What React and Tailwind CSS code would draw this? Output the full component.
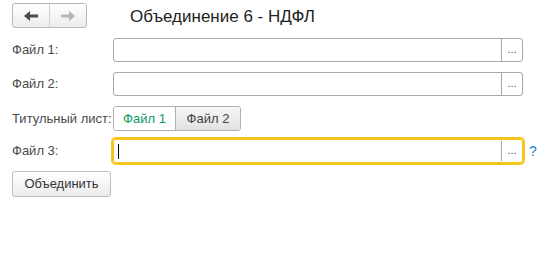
import React from "react";

const font = { fontFamily: "'Liberation Sans', Arial, sans-serif" };

function Arrow({ dir, color }) {
  return (
    <svg width="14" height="10" viewBox="0 0 14 10" className={dir === "right" ? "rotate-180" : ""}>
      <path d="M0 5 L6 0 L6 3.5 L14 3.5 L14 6.5 L6 6.5 L6 10 Z" fill={color} />
    </svg>
  );
}

function FileInput({ focused }) {
  return (
    <div
      className={`w-[410px] h-6 flex rounded-[3px] bg-white ${
        focused ? "border border-[#f6c51c] outline-2 outline-[#f6c51c]" : "border border-[#a8a8a8]"
      }`}
    >
      <div className="flex-1 flex items-center pl-[4px]">
        {focused && <div className="w-[1px] h-[15px] bg-black" />}
      </div>
      <div className="w-[21px] flex items-center justify-center">
        <div className={`w-[1px] bg-[#a8a8a8] self-stretch ${focused ? "my-[1px]" : ""}`} />
      </div>
      <div className="w-[20px] -ml-[10px] flex items-center justify-center text-[11px] text-[#555] leading-none pb-[2px]">...</div>
    </div>
  );
}

function Label({ children }) {
  return <div className="w-[101px] shrink-0 text-[13px] text-[#4a4a4a]">{children}</div>;
}

export default function App() {
  return (
    <div className="w-[555px] h-[257px] bg-white pl-[12px] pt-[3px]" style={font}>
      <div className="flex items-center h-[25px]">
        <div className="flex w-[75px] h-[25px] rounded-[3px] border border-[#b8b8b8] bg-gradient-to-b from-white to-[#ececec] overflow-hidden">
          <div className="w-[37px] flex items-center justify-center border-r border-[#cfcfcf]">
            <Arrow dir="left" color="#4a4a4a" />
          </div>
          <div className="flex-1 flex items-center justify-center">
            <Arrow dir="right" color="#b5b5b5" />
          </div>
        </div>
        <div className="ml-[43px] text-[17px] text-[#222] leading-none pt-[2px]">Объединение 6 - НДФЛ</div>
      </div>

      <div className="flex items-center mt-[10px]">
        <Label>Файл 1:</Label>
        <FileInput />
      </div>
      <div className="flex items-center mt-[10px]">
        <Label>Файл 2:</Label>
        <FileInput />
      </div>
      <div className="flex items-center mt-[10px]">
        <Label>Титульный лист:</Label>
        <div className="flex h-[25px] rounded-[3px] border border-[#b0b0b0] overflow-hidden text-[13px]">
          <div className="w-[62px] flex items-center justify-center bg-white text-[#0e9a5b] border-r border-[#b0b0b0]">Файл 1</div>
          <div className="w-[64px] flex items-center justify-center bg-gradient-to-b from-[#f7f7f7] to-[#e2e2e2] text-[#444]">Файл 2</div>
        </div>
      </div>
      <div className="flex items-center mt-[8px]">
        <Label>Файл 3:</Label>
        <FileInput focused />
        <div className="ml-[6px] text-[14px] text-[#2a7fd0]">?</div>
      </div>
      <div className="mt-[8px] w-[99px] h-[26px] flex items-center justify-center rounded-[3px] border border-[#bdbdbd] bg-gradient-to-b from-white to-[#ebebeb] text-[13px] text-[#333]">
        Объединить
      </div>
    </div>
  );
}
